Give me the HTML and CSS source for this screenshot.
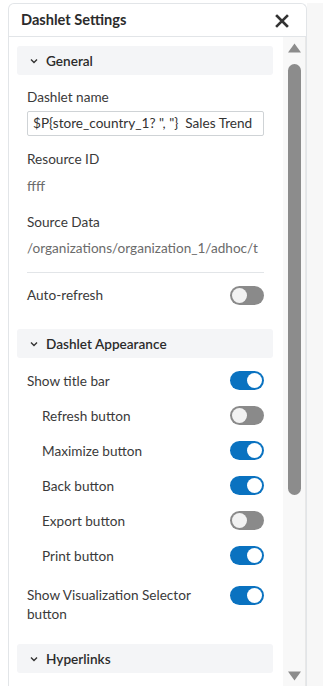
FILE: index.html
```html
<!DOCTYPE html>
<html>
<head>
<meta charset="utf-8">
<link rel="stylesheet" href="styles.css">
</head>
<body>
<div class="page">
  <div class="panel">
    <div class="panel-header">
      <span class="panel-title">Dashlet Settings</span>
      <svg class="close" width="14" height="14" viewBox="0 0 14 14"><path d="M2 2 L12 12 M12 2 L2 12" stroke="#333" stroke-width="2.6" stroke-linecap="square"/></svg>
    </div>
    <div class="panel-body">
      <div class="content">
        <div class="section-head">
          <svg class="chev" width="8" height="6" viewBox="0 0 8 6"><path d="M1 1.5 L4 4.5 L7 1.5" fill="none" stroke="#333" stroke-width="1.4"/></svg>
          <span>General</span>
        </div>
        <div class="fields">
          <div class="label first">Dashlet name</div>
          <div class="input">$P{store_country_1? ", "}&nbsp; Sales Trend</div>
          <div class="label gap-a">Resource ID</div>
          <div class="value">ffff</div>
          <div class="label gap-b">Source Data</div>
          <div class="value path">/organizations/organization_1/adhoc/t</div>
          <div class="divider"></div>
          <div class="row"><span>Auto-refresh</span><span class="toggle"></span></div>
        </div>
        <div class="section-head appearance">
          <svg class="chev" width="8" height="6" viewBox="0 0 8 6"><path d="M1 1.5 L4 4.5 L7 1.5" fill="none" stroke="#333" stroke-width="1.4"/></svg>
          <span>Dashlet Appearance</span>
        </div>
        <div class="fields rows">
          <div class="row"><span>Show title bar</span><span class="toggle on"></span></div>
          <div class="row sub"><span>Refresh button</span><span class="toggle"></span></div>
          <div class="row sub"><span>Maximize button</span><span class="toggle on"></span></div>
          <div class="row sub"><span>Back button</span><span class="toggle on"></span></div>
          <div class="row sub"><span>Export button</span><span class="toggle"></span></div>
          <div class="row sub"><span>Print button</span><span class="toggle on"></span></div>
          <div class="row multi"><span class="multi-text">Show Visualization Selector button</span><span class="toggle on"></span></div>
        </div>
        <div class="section-head hyper">
          <svg class="chev" width="8" height="6" viewBox="0 0 8 6"><path d="M1 1.5 L4 4.5 L7 1.5" fill="none" stroke="#333" stroke-width="1.4"/></svg>
          <span>Hyperlinks</span>
        </div>
      </div>
      <div class="scrollbar">
        <svg class="arrow" width="13" height="10" viewBox="0 0 13 10"><path d="M6.5 0.5 L13 9.5 L0 9.5 Z" fill="#8c8c8c"/></svg>
        <div class="thumb"></div>
        <div class="track-fill"></div>
        <svg class="arrow" width="13" height="10" viewBox="0 0 13 10"><path d="M0 0.5 L13 0.5 L6.5 9.5 Z" fill="#8c8c8c"/></svg>
      </div>
    </div>
  </div>
  <div class="side"></div>
</div>
</body>
</html>
```
FILE: styles.css
```css
* { box-sizing: border-box; }
html, body { margin: 0; padding: 0; height: 100%; }
body {
  font-family: Lato, "Open Sans", sans-serif;
  font-size: 13.6px;
  color: #333;
  background: #fff;
}
.page {
  display: flex;
  height: 686px;
  padding: 3px 0 0 8px;
  overflow: hidden;
}
.panel {
  width: 299px;
  height: 683px;
  border: 1px solid #e2e5e8;
  border-bottom: none;
  border-radius: 6px 6px 0 0;
  display: flex;
  flex-direction: column;
  background: #fff;
}
.side {
  flex: 1;
  background: #f7f7f7;
}
.panel-header {
  height: 33px;
  flex: none;
  display: flex;
  align-items: center;
  justify-content: space-between;
  padding: 0 17px 0 12px;
  border-bottom: 1px solid #e2e5e8;
}
.panel-title {
  font-size: 14.6px;
  font-weight: 700;
  color: #2b2b2b;
  margin-top: -1px;
}
.close { display: block; margin-top: 1px; }
.panel-body {
  flex: 1;
  display: flex;
  min-height: 0;
}
.content {
  width: 274px;
  padding: 9px 10px 0 8px;
  overflow: hidden;
}
.section-head {
  height: 29px;
  background: #f4f5f7;
  border-radius: 3px;
  display: flex;
  align-items: center;
  padding-left: 13px;
  font-weight: 600;
  color: #2b2b2b;
}
.chev { margin-right: 8px; margin-top: 1px; }
.fields { padding: 0 9px 0 10px; }
.label { line-height: 19px; color: #3a3a3a; }
.label.first { margin-top: 12.5px; }
.label.gap-a { margin-top: 13.5px; }
.label.gap-b { margin-top: 17px; }
.input {
  margin-top: 4.5px;
  height: 25px;
  border: 1px solid #cfd3d6;
  border-radius: 2px;
  padding: 0 5px;
  line-height: 23px;
  white-space: nowrap;
  overflow: hidden;
  color: #333;
}
.value {
  margin-top: 8px;
  line-height: 19px;
  color: #6b6b6b;
}
.value.path {
  margin-top: 7px;
  white-space: nowrap;
}
.divider {
  margin-top: 14px;
  border-top: 1px solid #e2e5e8;
}
.row {
  height: 35px;
  display: flex;
  align-items: center;
  justify-content: space-between;
  color: #3a3a3a;
}
.fields .divider + .row { margin-top: 5px; }
.section-head.appearance { margin-top: 16.5px; }
.rows { padding-top: 5px; }
.row.sub { padding-left: 15px; }
.row.multi {
  height: auto;
  align-items: flex-start;
  padding-top: 13px;
}
.multi-text { line-height: 19px; width: 185px; }
.toggle {
  width: 34px;
  height: 19px;
  border-radius: 10px;
  background: #8a8a8a;
  position: relative;
  flex: none;
}
.toggle::after {
  content: "";
  position: absolute;
  top: 2px;
  left: 2px;
  width: 15px;
  height: 15px;
  border-radius: 50%;
  background: #f2f2f2;
}
.toggle.on { background: #0a72c0; }
.toggle.on::after { left: 17px; background: #fff; }
.section-head.hyper { margin-top: 20px; }
.scrollbar {
  width: 23px;
  background: #f8f8f8;
  display: flex;
  flex-direction: column;
  align-items: center;
  padding: 6px 0 5px 0;
  border-right: 1px solid #e8e8e8;
}
.arrow { display: block; flex: none; margin-left: 1px; }
.thumb {
  width: 13px;
  height: 431px;
  margin-top: 11px;
  margin-left: 1px;
  background: #8c8c8c;
  border-radius: 7px;
  flex: none;
}
.track-fill { flex: 1; }
```
